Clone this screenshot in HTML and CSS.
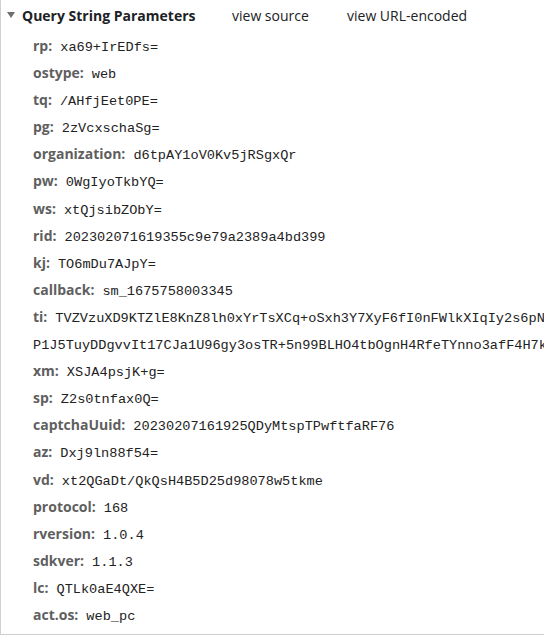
FILE: index.html
```html
<!DOCTYPE html>
<html>
<head>
<meta charset="utf-8">
<link rel="stylesheet" href="styles.css">
</head>
<body>
<div class="panel">
  <div class="header">
    <span class="tri"></span>
    <span class="title">Query String Parameters</span>
    <span class="link link-source">view source</span>
    <span class="link">view URL-encoded</span>
  </div>
  <div class="list">
    <div class="row"><span class="k">rp:</span><span class="v">xa69+IrEDfs=</span></div>
    <div class="row"><span class="k">ostype:</span><span class="v">web</span></div>
    <div class="row"><span class="k">tq:</span><span class="v">/AHfjEet0PE=</span></div>
    <div class="row"><span class="k">pg:</span><span class="v">2zVcxschaSg=</span></div>
    <div class="row"><span class="k">organization:</span><span class="v">d6tpAY1oV0Kv5jRSgxQr</span></div>
    <div class="row"><span class="k">pw:</span><span class="v">0WgIyoTkbYQ=</span></div>
    <div class="row"><span class="k">ws:</span><span class="v">xtQjsibZObY=</span></div>
    <div class="row"><span class="k">rid:</span><span class="v">202302071619355c9e79a2389a4bd399</span></div>
    <div class="row"><span class="k">kj:</span><span class="v">TO6mDu7AJpY=</span></div>
    <div class="row"><span class="k">callback:</span><span class="v">sm_1675758003345</span></div>
    <div class="row"><span class="k">ti:</span><span class="v">TVZVzuXD9KTZlE8KnZ8lh0xYrTsXCq+oSxh3Y7XyF6fI0nFWlkXIqIy2s6pNxQ<wbr>P1J5TuyDDgvvIt17CJa1U96gy3osTR+5n99BLHO4tbOgnH4RfeTYnno3afF4H7kq=</span></div>
    <div class="row"><span class="k">xm:</span><span class="v">XSJA4psjK+g=</span></div>
    <div class="row"><span class="k">sp:</span><span class="v">Z2s0tnfax0Q=</span></div>
    <div class="row"><span class="k">captchaUuid:</span><span class="v">20230207161925QDyMtspTPwftfaRF76</span></div>
    <div class="row"><span class="k">az:</span><span class="v">Dxj9ln88f54=</span></div>
    <div class="row"><span class="k">vd:</span><span class="v">xt2QGaDt/QkQsH4B5D25d98078w5tkme</span></div>
    <div class="row"><span class="k">protocol:</span><span class="v">168</span></div>
    <div class="row"><span class="k">rversion:</span><span class="v">1.0.4</span></div>
    <div class="row"><span class="k">sdkver:</span><span class="v">1.1.3</span></div>
    <div class="row"><span class="k">lc:</span><span class="v">QTLk0aE4QXE=</span></div>
    <div class="row"><span class="k">act.os:</span><span class="v">web_pc</span></div>
  </div>
</div>
</body>
</html>
```
FILE: styles.css
```css
html, body {
  margin: 0;
  padding: 0;
  background: #fff;
  overflow: hidden;
}
body {
  width: 544px;
  height: 637px;
}
.panel {
  width: 760px;
  border-left: 1px solid #d0d0d0;
  border-bottom: 1px solid #cfcfcf;
  padding-bottom: 6px;
  font-family: "Open Sans", "DejaVu Sans", sans-serif;
}
.header {
  display: flex;
  align-items: center;
  height: 30px;
  padding-left: 6px;
  color: #202124;
}
.tri {
  width: 0;
  height: 0;
  border-left: 4px solid transparent;
  border-right: 4px solid transparent;
  border-top: 6px solid #6e6e6e;
  margin-right: 7px;
}
.title {
  font-weight: 700;
  font-size: 14px;
  width: 210px;
}
.link {
  font-size: 14px;
  color: #202124;
}
.link-source {
  width: 115px;
}
.list {
  padding-top: 2px;
  padding-left: 32px;
}
.row {
  font-size: 14px;
  line-height: 27.1px;
}
.k {
  font-weight: 700;
  font-size: 14px;
  line-height: 16px;
  color: #5f5f5f;
}
.v {
  margin-left: 8px;
  font-family: "Liberation Mono", "DejaVu Sans Mono", monospace;
  font-size: 13.6px;
  line-height: 16px;
  color: #222;
}
```
